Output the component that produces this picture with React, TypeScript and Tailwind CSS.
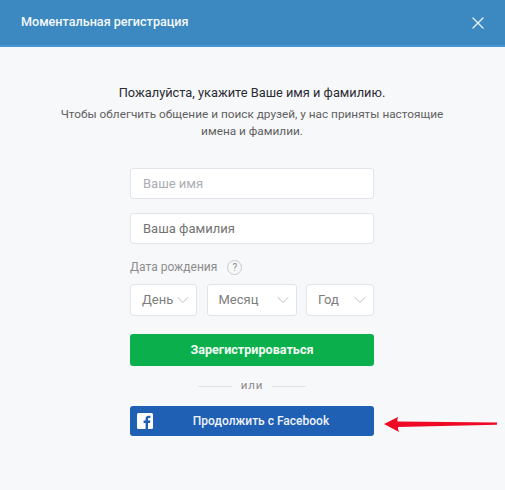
import React from 'react';
import { X, ChevronDown } from 'lucide-react';

const DateSelect: React.FC<{ label: string; className: string }> = ({ label, className }) => (
    <div className={`flex h-[32px] items-center justify-between rounded-[3px] border border-[#e1e5ea] bg-white pl-[11px] pr-[3px] text-[13px] text-[#7d7d7d] ${className}`}>
        <span>{label}</span>
        <ChevronDown className="h-[20px] w-[20px] text-[#a9b0b8]" strokeWidth={1} />
    </div>
);

const App: React.FC = () => {
    return (
        <div className="relative h-[490px] w-[505px] overflow-hidden bg-[#f7f8fa] font-['Roboto',sans-serif]">
            <div className="flex h-[47px] items-center justify-between border-b-[2px] border-[#4a96d2] bg-[#3c89c1] pl-[21px] pr-[17px]">
                <span className="text-[12.6px] font-medium text-[#f4f8fb]">Моментальная регистрация</span>
                <X className="h-[20px] w-[20px] text-[#e4eef6]" strokeWidth={1.6} />
            </div>

            <div className="flex flex-col items-center pr-[1px] pt-[36px]">
                <p className="text-[12.8px] leading-[20px] text-[#2b2b33]">
                    Пожалуйста, укажите Ваше имя и фамилию.
                </p>
                <p className="mt-[3px] w-[400px] text-center text-[11.8px] leading-[17px] text-[#5f5f5f]">
                    Чтобы облегчить общение и поиск друзей, у нас приняты настоящие имена и фамилии.
                </p>

                <div className="mt-[28px] flex w-[244px] flex-col">
                    <div className="flex h-[31px] items-center rounded-[3px] border border-[#e1e5ea] bg-white pl-[12px] text-[13px] text-[#a9adb3]">
                        Ваше имя
                    </div>
                    <div className="mt-[14px] flex h-[31px] items-center rounded-[3px] border border-[#e1e5ea] bg-white pl-[12px] text-[13px] text-[#737373]">
                        Ваша фамилия
                    </div>

                    <div className="mt-[14px] flex h-[18px] items-center text-[12px] text-[#8c8c8c]">
                        <span>Дата рождения</span>
                        <span className="ml-[10px] flex h-[15px] w-[15px] items-center justify-center rounded-full border border-[#c5cad0] text-[10px] text-[#8c8c8c]">?</span>
                    </div>

                    <div className="mt-[8px] flex justify-between">
                        <DateSelect label="День" className="w-[67px]" />
                        <DateSelect label="Месяц" className="w-[90px]" />
                        <DateSelect label="Год" className="w-[68px]" />
                    </div>

                    <button className="mt-[18px] h-[32px] rounded-[3px] bg-[#0bb04c] text-[12.6px] font-bold text-[#f2fbf5]">
                        Зарегистрироваться
                    </button>

                    <div className="mt-[12px] flex h-[16px] items-center justify-center text-[11.5px] tracking-[0.8px] text-[#8a8a8a]">
                        <span className="h-px w-[34px] bg-[#e1e3e6]" />
                        <span className="mx-[9px]">или</span>
                        <span className="h-px w-[34px] bg-[#e1e3e6]" />
                    </div>

                    <button className="relative mt-[12px] h-[30px] rounded-[3px] bg-[#1f5fb4] pl-[18px] text-[12px] font-medium text-[#eef3fa]">
                        <svg className="absolute left-[7px] top-[7px] h-[16px] w-[16px]" viewBox="0 0 16 16">
                            <rect width="16" height="16" rx="1.5" fill="#fff" />
                            <path d="M11 16v-6h2l.4-2.4H11V6.2c0-.8.3-1.2 1.2-1.2h1.2V2.8c-.5-.1-1.1-.1-1.7-.1-1.9 0-3.1 1.1-3.1 3.2v1.7H6.6V10h2v6z" fill="#1f5fb4" />
                        </svg>
                        Продолжить с Facebook
                    </button>
                </div>
            </div>

            {/* красная стрелка поверх скриншота */}
            <svg className="absolute left-[382px] top-[412px] h-[24px] w-[118px]" viewBox="0 0 118 24">
                <path d="M2 12 L16 5 Q15 8 15.5 9.6 L115 10.6 L115 12.8 L16 15 Q15.5 17 17 20 Z" fill="#ee0a24" />
            </svg>
        </div>
    );
};

export default App;
